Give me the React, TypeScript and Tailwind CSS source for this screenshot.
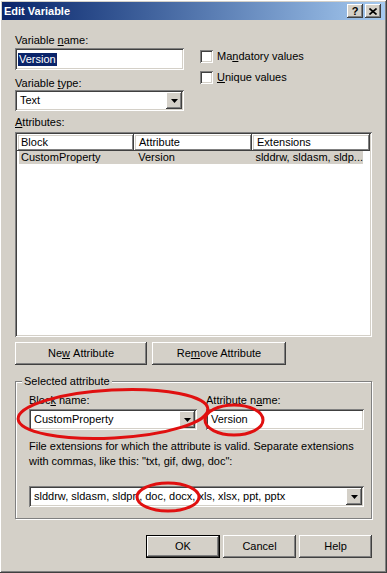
import React from "react";

const raised =
  "shadow-[inset_-1px_-1px_0_#404040,inset_1px_1px_0_#ffffff,inset_-2px_-2px_0_#808080,inset_2px_2px_0_#d4d0c8]";
const sunken =
  "shadow-[inset_1px_1px_0_#808080,inset_-1px_-1px_0_#ffffff,inset_2px_2px_0_#404040,inset_-2px_-2px_0_#d4d0c8]";

const DropArrow = () => (
  <div className={`w-[16px] h-[17px] bg-[#d4d0c8] flex items-center justify-center shrink-0 ${raised}`}>
    <svg width="7" height="4" viewBox="0 0 7 4">
      <path d="M0 0h7L3.5 4z" fill="#000" />
    </svg>
  </div>
);

const Combo = ({ value, width }: { value: string; width: string }) => (
  <div className={`${width} h-[21px] bg-white flex items-center p-[2px] ${sunken}`}>
    <span className="flex-1 pl-[3px] whitespace-nowrap overflow-hidden">{value}</span>
    <DropArrow />
  </div>
);

const Check = ({ children }: { children: React.ReactNode }) => (
  <div className="flex items-center h-[13px]">
    <div className={`w-[13px] h-[13px] bg-white ${sunken}`} />
    <span className="ml-[4px]">{children}</span>
  </div>
);

const Btn = ({ children, className = "" }: { children: React.ReactNode; className?: string }) => (
  <div className={`h-[23px] bg-[#d4d0c8] flex items-center justify-center ${raised} ${className}`}>
    {children}
  </div>
);

export default function App() {
  return (
    <div
      className={`relative w-[387px] h-[573px] bg-[#d4d0c8] p-[2px] text-[11px] leading-[13px] text-black ${raised}`}
      style={{ fontFamily: '"Liberation Sans", Arial, sans-serif' }}
    >
      {/* Title bar */}
      <div className="h-[18px] flex items-center bg-gradient-to-r from-[#0a246a] to-[#a6caf0] pl-[2px] pr-[4px]">
        <span className="font-bold text-white flex-1">Edit Variable</span>
        <div className={`w-[16px] h-[14px] flex items-center justify-center font-bold text-[11px] ${raised} bg-[#d4d0c8]`}>?</div>
        <div className={`w-[16px] h-[14px] ml-[2px] flex items-center justify-center ${raised} bg-[#d4d0c8]`}>
          <svg width="8" height="7" viewBox="0 0 8 7">
            <path d="M0.5 0.5L7.5 6.5M7.5 0.5L0.5 6.5" stroke="#000" strokeWidth="1.6" />
          </svg>
        </div>
      </div>

      <div className="px-[13px]">
        {/* Top fields */}
        <div className="flex">
          <div className="w-[169px]">
            <div className="mt-[14px] h-[14px]">
              Variable <u>n</u>ame:
            </div>
            <div className={`h-[22px] bg-white flex items-center pl-[3px] ${sunken}`}>
              <span className="bg-[#0a246a] text-white px-[1px]">Version</span>
            </div>
            <div className="mt-[7px] h-[13px]">
              Variable <u>t</u>ype:
            </div>
            <Combo value="Text" width="w-[169px]" />
          </div>
          <div className="ml-[16px] pt-[30px] flex flex-col gap-[8px]">
            <Check>
              Ma<u>n</u>datory values
            </Check>
            <Check>
              <u>U</u>nique values
            </Check>
          </div>
        </div>

        <div className="mt-[5px] h-[16px]">
          <u>A</u>ttributes:
        </div>
        <div className={`h-[205px] bg-white p-[2px] ${sunken}`}>
          <div className="flex h-[17px]">
            <div className={`w-[117px] flex items-center pl-[4px] ${raised}`}>Block</div>
            <div className={`w-[118px] flex items-center pl-[5px] ${raised}`}>Attribute</div>
            <div className={`flex-1 flex items-center pl-[5px] ${raised}`}>Extensions</div>
          </div>
          <div className="flex h-[13px] ml-[2px] mr-[7px] bg-[#d4d0c8] items-center">
            <div className="w-[115px] pl-[2px]">CustomProperty</div>
            <div className="w-[118px] pl-[5px]">Version</div>
            <div className="flex-1 pl-[5px] whitespace-nowrap">slddrw, sldasm, sldp...</div>
          </div>
        </div>

        <div className="flex mt-[5px] gap-[5px]">
          <Btn className="w-[132px]">
            Ne<u>w</u>&nbsp;Attribute
          </Btn>
          <Btn className="w-[134px]">
            Re<u>m</u>ove Attribute
          </Btn>
        </div>

        {/* Group box */}
        <div className="relative mt-[16px] h-[138px] border border-[#808080] shadow-[inset_1px_1px_0_#ffffff,1px_1px_0_#ffffff] pl-[13px] pr-[7px]">
          <span className="absolute left-[6px] top-[-7px] bg-[#d4d0c8] px-[2px]">Selected attribute</span>
          <div className="flex mt-[12px]">
            <div className="w-[168px]">
              <div className="h-[15px]">
                Bloc<u>k</u> name:
              </div>
              <Combo value="CustomProperty" width="w-[168px]" />
            </div>
            <div className="ml-[9px] flex-1">
              <div className="h-[15px]">
                Attribute n<u>a</u>me:
              </div>
              <div className={`h-[21px] bg-white flex items-center pl-[5px] ${sunken}`}>Version</div>
            </div>
          </div>
          <div className="mt-[9px] leading-[15px]">
            File extensions for which the attribute is valid. Separate extensions
            <br />
            with commas, like this: "txt, gif, dwg, doc":
          </div>
          <div className="mt-[17px]">
            <Combo value="slddrw, sldasm, sldprt, doc, docx, xls, xlsx, ppt, pptx" width="w-full" />
          </div>
        </div>

        {/* Bottom buttons */}
        <div className="flex justify-end mt-[16px] gap-[3px]">
          <div className="w-[74px] h-[23px] border border-black">
            <Btn className="h-full">OK</Btn>
          </div>
          <Btn className="w-[73px]">Cancel</Btn>
          <Btn className="w-[73px]">Help</Btn>
        </div>
      </div>

      {/* Red annotation marks */}
      <svg className="absolute inset-0 pointer-events-none" width="387" height="573">
        <ellipse cx="113" cy="414" rx="95" ry="24" transform="rotate(-3 113 414)" fill="none" stroke="#e01010" strokeWidth="3" />
        <ellipse cx="234" cy="420" rx="29" ry="15" fill="none" stroke="#e01010" strokeWidth="3" />
        <ellipse cx="168" cy="497" rx="31" ry="14" fill="none" stroke="#e01010" strokeWidth="3" />
      </svg>
    </div>
  );
}
